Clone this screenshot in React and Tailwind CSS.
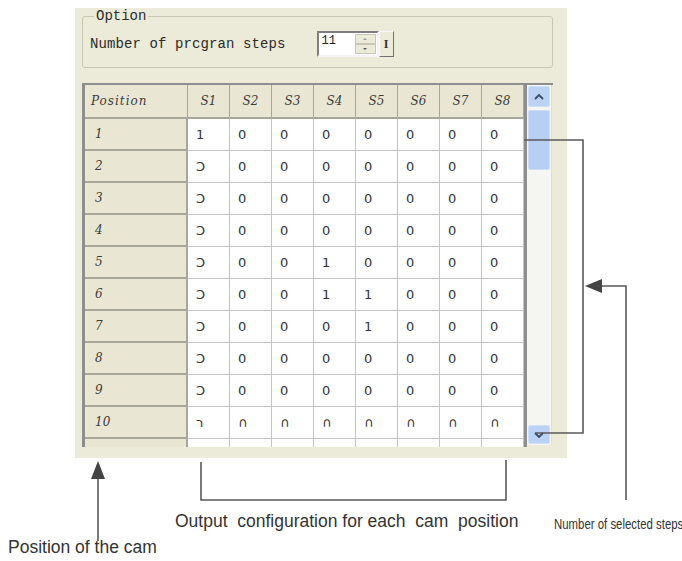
import React from "react";

const data = [
  ["1", "0", "0", "0", "0", "0", "0", "0"],
  ["Ↄ", "0", "0", "0", "0", "0", "0", "0"],
  ["Ↄ", "0", "0", "0", "0", "0", "0", "0"],
  ["Ↄ", "0", "0", "0", "0", "0", "0", "0"],
  ["Ↄ", "0", "0", "1", "0", "0", "0", "0"],
  ["Ↄ", "0", "0", "1", "1", "0", "0", "0"],
  ["Ↄ", "0", "0", "0", "1", "0", "0", "0"],
  ["Ↄ", "0", "0", "0", "0", "0", "0", "0"],
  ["Ↄ", "0", "0", "0", "0", "0", "0", "0"],
  ["ר", "∩", "∩", "∩", "∩", "∩", "∩", "∩"],
];

const heads = ["S1", "S2", "S3", "S4", "S5", "S6", "S7", "S8"];

function HeadCell({ children, wide }) {
  return (
    <div
      className={
        "h-[34px] flex items-center bg-[#e9e7d4] border-r border-b-2 border-r-[#a8a79c] border-b-[#a8a79c] italic text-[12px] text-[#3c3c3c] " +
        (wide ? "pl-[6px] tracking-[1px]" : "justify-center")
      }
      style={{ fontFamily: '"DejaVu Serif", "Liberation Serif", serif' }}
    >
      {children}
    </div>
  );
}

function PosCell({ children }) {
  return (
    <div
      className="h-[32px] flex items-center pl-[10px] bg-[#e9e7d4] border-r-2 border-b-2 border-r-[#a8a79c] border-b-[#a8a79c] italic text-[12px] text-[#3c3c3c]"
      style={{ fontFamily: '"DejaVu Serif", "Liberation Serif", serif' }}
    >
      {children}
    </div>
  );
}

function DataCell({ children }) {
  return (
    <div className="h-[32px] flex items-center pl-[8px] bg-white border-r border-b border-[#c4c4c4] text-[13px] text-[#333] font-['DejaVu_Sans',sans-serif]">
      {children}
    </div>
  );
}

export default function App() {
  return (
    <div className="relative w-[682px] h-[561px] bg-white overflow-hidden font-['Liberation_Sans',sans-serif]">
      <div className="pl-[75px] pt-[8px]">
        <div className="w-[492px] h-[450px] bg-[#ecead9] pl-[7px] pr-[14px] flex flex-col">
          {/* Option group */}
          <fieldset className="border border-[#c9c6b4] rounded-[3px] px-[7px] pt-[7px] pb-[10px]">
            <legend className="ml-[4px] px-[2px] h-[16px] leading-[16px] text-[14px] text-[#2a2a2a] font-['Liberation_Mono',monospace]">
              Option
            </legend>
            <div className="h-[26px] flex items-center">
              <span className="text-[14px] text-[#2a2a2a] font-['Liberation_Mono',monospace] tracking-[0.1px]">
                Number of prcgran steps
              </span>
              <div className="ml-[31px] flex items-stretch h-[26px]">
                <div className="w-[62px] flex bg-white border-2 border-t-[#7e7e7e] border-l-[#7e7e7e] border-r-[#f4f4f4] border-b-[#f4f4f4]">
                  <span className="flex-1 pl-[3px] pt-[1px] text-[12px] text-[#222] font-['Liberation_Mono',monospace] leading-[14px]">
                    11
                  </span>
                  <div className="w-[21px] flex flex-col my-[1px] mr-[1px]">
                    <div className="flex-1 bg-[#ecead9] border border-[#c8c6b8] flex items-center justify-center">
                      <div className="w-0 h-0 border-l-[2px] border-r-[2px] border-b-[2px] border-l-transparent border-r-transparent border-b-[#999]"></div>
                    </div>
                    <div className="flex-1 bg-[#ecead9] border border-[#c8c6b8] flex items-center justify-center">
                      <div className="w-0 h-0 border-l-[2px] border-r-[2px] border-t-[2px] border-l-transparent border-r-transparent border-t-[#555]"></div>
                    </div>
                  </div>
                </div>
                <div className="w-[15px] bg-[#ecead9] border border-t-[#f8f8f8] border-l-[#f8f8f8] border-r-[#707070] border-b-[#707070] flex items-center justify-center text-[12px] font-bold text-[#333] font-['Liberation_Serif',serif]">
                  I
                </div>
              </div>
            </div>
          </fieldset>

          {/* Table */}
          <div className="mt-[15px] h-[364px] flex overflow-hidden border-t-2 border-[#8e8e8e]">
            <div className="w-[442px] border-l-[3px] border-[#8e8e8e]">
              <div className="grid grid-cols-[103px_repeat(8,42px)]">
                <HeadCell wide>Position</HeadCell>
                {heads.map((h) => (
                  <HeadCell key={h}>{h}</HeadCell>
                ))}
                {data.map((row, i) => (
                  <React.Fragment key={i}>
                    <PosCell>{i + 1}</PosCell>
                    {row.map((v, j) => (
                      <DataCell key={j}>{v}</DataCell>
                    ))}
                  </React.Fragment>
                ))}
                <PosCell></PosCell>
                {heads.map((h) => (
                  <DataCell key={"x" + h}></DataCell>
                ))}
              </div>
            </div>
            {/* scrollbar */}
            <div className="w-[28px] flex border-l-[3px] border-[#8e8e8e]">
              <div className="flex-1 h-[360px] bg-[#f5f5f1] border-r border-[#dcdbe8] flex flex-col px-[1px] py-[1px]">
                <div className="h-[21px] rounded-[2px] bg-[#bcd2f4] border border-[#d2e0f7] flex items-center justify-center">
                  <svg width="10" height="6" viewBox="0 0 10 6">
                    <path d="M1 5 L5 1 L9 5" fill="none" stroke="#3a4a6a" strokeWidth="1.8" />
                  </svg>
                </div>
                <div className="mt-[3px] h-[60px] rounded-[2px] bg-[#b7cff4] border border-[#cfdcf5] flex items-center justify-center">
                  <div className="w-[7px] h-[1px] bg-[#d6e3f8]"></div>
                </div>
                <div className="flex-1"></div>
                <div className="h-[19px] rounded-[2px] bg-[#bcd2f4] border border-[#d2e0f7] flex items-center justify-center">
                  <svg width="10" height="6" viewBox="0 0 10 6">
                    <path d="M1 1 L5 5 L9 1" fill="none" stroke="#3a4a6a" strokeWidth="1.8" />
                  </svg>
                </div>
              </div>
            </div>
          </div>
        </div>
      </div>

      {/* Callout drawings */}
      <svg className="absolute left-0 top-0 pointer-events-none" width="682" height="561" viewBox="0 0 682 561">
        <g stroke="#5a5a5a" strokeWidth="1.6" fill="none">
          <line x1="98" y1="476" x2="98" y2="541" />
          <polyline points="201,462 201,500 506,500 506,460" />
          <polyline points="524,140 583,140 583,433 535,433" />
          <polyline points="600,286 626,286 626,500" />
        </g>
        <polygon points="98,461 91,479 105,479" fill="#444" />
        <polygon points="585,286 602,279 602,293" fill="#444" />
      </svg>

      <span className="absolute left-[8px] top-[537px] text-[17.5px] leading-[20px] text-[#333] font-['Liberation_Sans',sans-serif]">
        Position of the cam
      </span>
      <span className="absolute left-[175px] top-[511px] text-[17.5px] leading-[20px] text-[#333] font-['Liberation_Sans',sans-serif] whitespace-pre">
        Output  configuration for each  cam  position
      </span>
      <span className="absolute left-[554px] top-[515px] text-[15px] leading-[18px] text-[#333] font-['Liberation_Sans',sans-serif] whitespace-nowrap origin-left scale-x-[0.76]">
        Number of selected steps
      </span>
    </div>
  );
}
